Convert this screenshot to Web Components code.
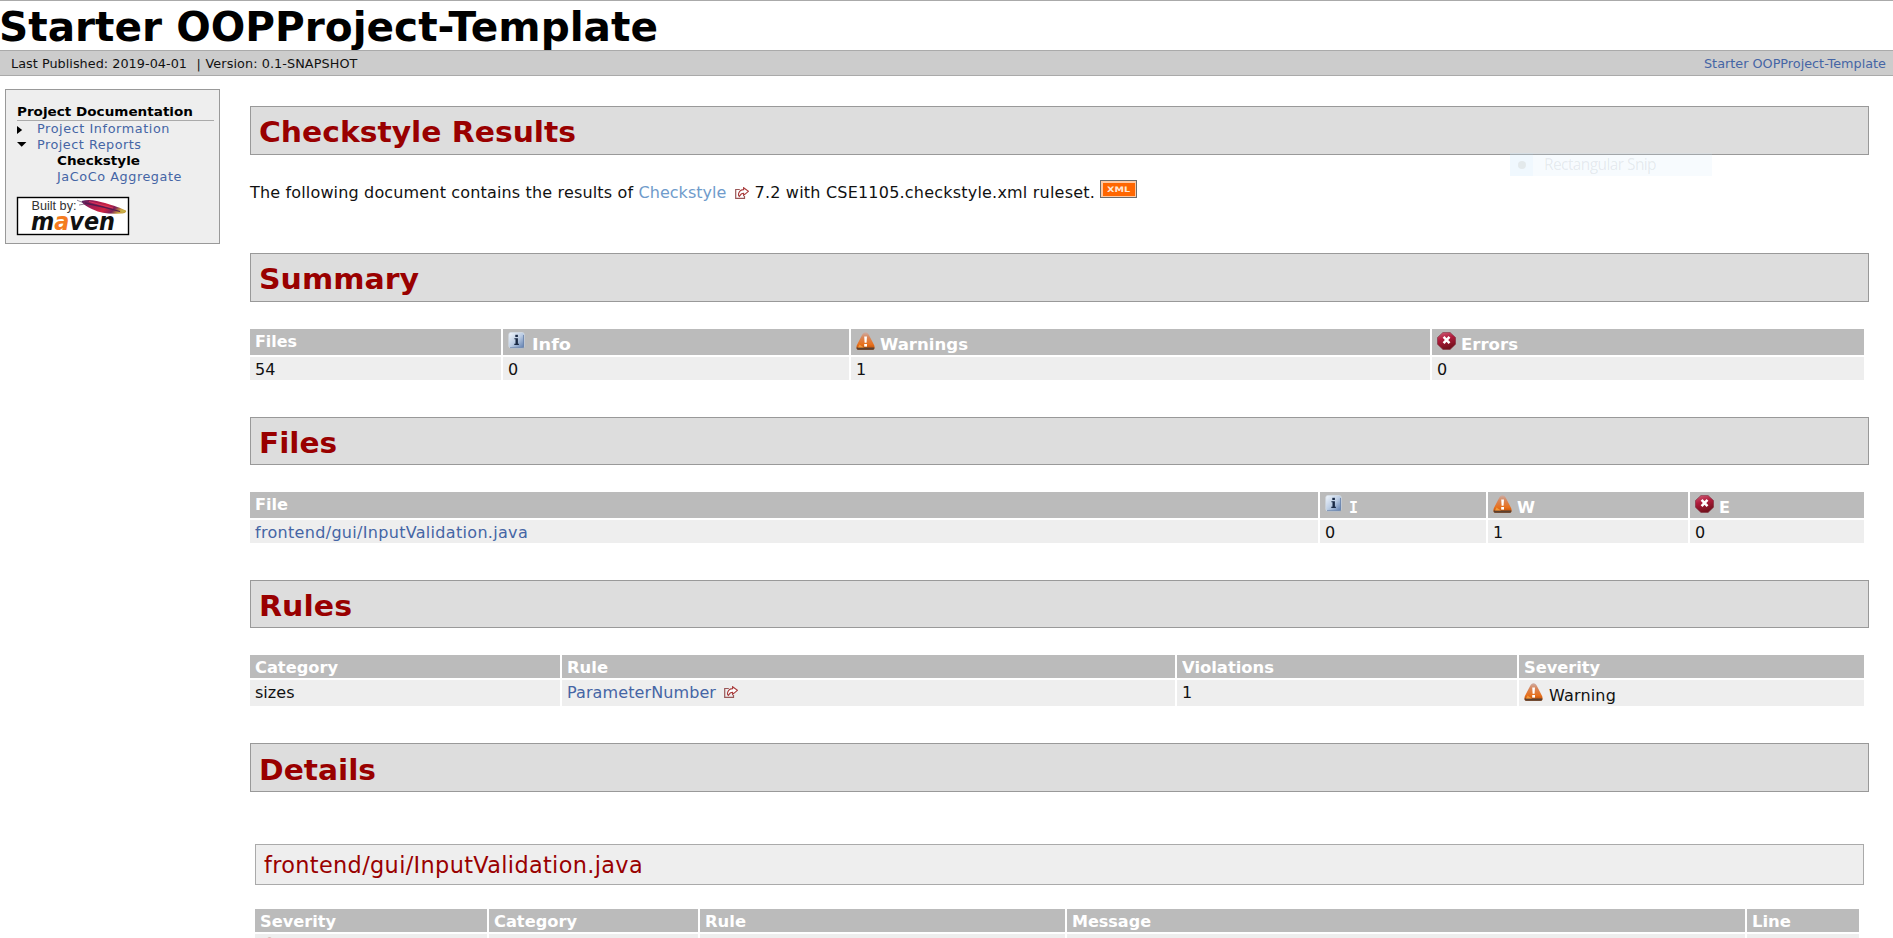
<!DOCTYPE html>
<html lang="en">
<head>
<meta charset="utf-8">
<title>Starter OOPProject-Template - Checkstyle Results</title>
<style>
html,body{margin:0;padding:0;background:#fff}
body{font-family:"DejaVu Sans",Verdana,sans-serif;font-size:16px;color:#000;height:938px;overflow:hidden}
</style>
</head>
<body>
<checkstyle-page></checkstyle-page>
<script>
function define(name, html, setup) {
  const tpl = document.createElement('template');
  tpl.innerHTML = html;
  customElements.define(name, class extends HTMLElement {
    constructor() {
      super();
      this.attachShadow({ mode: 'open' }).appendChild(tpl.content.cloneNode(true));
    }
    connectedCallback() { if (setup) setup(this, this.shadowRoot); }
  });
}

/* Text set to a given measure: bold text is widened, regular text is letter-spaced. */
define('fit-text', `<style>:host{display:inline-block;white-space:pre;flex:none}span{display:inline-block;transform-origin:0 50%}</style><span><slot></slot></span>`, (el, root) => {
  const span = root.querySelector('span');
  const target = parseFloat(el.getAttribute('w'));
  el.style.width = target + 'px';
  const natural = span.getBoundingClientRect().width;
  if (parseInt(getComputedStyle(el).fontWeight) >= 600) {
    span.style.transform = 'scaleX(' + (target / natural).toFixed(4) + ')';
  } else {
    span.style.letterSpacing = ((target - natural) / el.textContent.length).toFixed(4) + 'px';
  }
});

const ICONS = {
  info: `<svg width="17" height="17" viewBox="0 0 17 17"><defs><linearGradient id="g" x1="0" y1="0" x2="1" y2="1"><stop offset="0" stop-color="#f2f7fc"/><stop offset=".5" stop-color="#bccde4"/><stop offset="1" stop-color="#5878ab"/></linearGradient></defs><rect x=".8" y=".5" width="15.4" height="15.5" rx="2" fill="url(#g)" stroke="#d6dfea" stroke-width=".7"/><path d="M2 15.7H15.5V3" fill="none" stroke="#6680aa" stroke-width=".8"/><rect x="7.3" y="2.8" width="2.6" height="2.2" fill="#1a2a45"/><path d="M6.4 6.2h3.500v5.600h1v1.200H6.300v-1.200h1.200V7.300H6.400z" fill="#1a2a45"/></svg>`,
  warning: `<svg width="19" height="18" viewBox="0 0 19 18"><defs><linearGradient id="g" x1="0" y1="0" x2="0" y2="1"><stop offset="0" stop-color="#cdaea6"/><stop offset=".3" stop-color="#d8865a"/><stop offset=".7" stop-color="#e8701c"/><stop offset="1" stop-color="#b44a08"/></linearGradient></defs><path d="M9.500.2C11 .2 12 1.200 12.800 2.800L18.200 13.200C18.900 15.500 18.700 17.700 17 17.700H2C.3 17.700.1 15.500.8 13.200L6.200 2.800C7 1.200 8 .2 9.500.2z" fill="url(#g)"/><path d="M.6 15.500H18.400Q18.500 17.700 17 17.700H2Q.5 17.700.6 15.500z" fill="#5a4030"/><path d="M2 15.500L3.500 12.500 8 15.500z" fill="#f39a3a"/><path d="M8.200 4.600h2.800l-.4 6.200H8.600z" fill="#fff"/><rect x="8.200" y="12" width="2.800" height="2.600" fill="#fff"/></svg>`,
  error: `<svg width="19" height="18" viewBox="0 0 19 18"><defs><linearGradient id="g" x1="0" y1="0" x2=".3" y2="1"><stop offset="0" stop-color="#d0607a"/><stop offset=".45" stop-color="#b01c3c"/><stop offset="1" stop-color="#74101c"/></linearGradient></defs><path d="M6 .4H13L18.500 5.500V12.300L13 17.600H6L.5 12.300V5.500z" fill="url(#g)" stroke="#7c2a3a" stroke-width=".6"/><path d="M6.600 4.800L12.500 11.200M12.500 4.800L6.600 11.200" stroke="#fff" stroke-width="2.500"/></svg>`
};
define('status-icon', `<style>:host{display:block;flex:none}svg{display:block}</style><div></div>`, (el, root) => {
  root.querySelector('div').innerHTML = ICONS[el.getAttribute('kind')];
});

define('external-mark', `<style>:host{display:block;flex:none;width:14px;height:12px}svg{display:block}</style>
<svg width="14" height="12" viewBox="0 0 14 12"><path d="M4.800 2.500H.7V11.300H9.500V9" fill="none" stroke="#9a5858" stroke-width="1.200"/><path d="M8.600.7L13.400 4.300 8.600 8.300V6.200Q6 6.200 4.300 9.400 3 8.400 3.800 6 5 2.700 8.600 2.600z" fill="#fff" stroke="#a83a3a" stroke-width="1.100"/></svg>`);

define('xml-badge', `<style>:host{display:block;box-sizing:border-box;width:37px;height:18px;border:1px solid #6a6a6a;background:#ffc8a0;padding:1.500px;flex:none}
div{background:#f60;height:13px;color:#ffe6d4;font:bold 7.500px/13px "DejaVu Sans",sans-serif;padding-left:4.500px}</style><div><fit-text w="23">XML</fit-text></div>`);

define('maven-badge', `<style>:host{display:block}svg{display:block;overflow:visible}</style>
<svg width="112" height="38" viewBox="0 0 112 38"><defs><linearGradient id="f" x1="0" y1="0" x2="1" y2=".3"><stop offset="0" stop-color="#4a2560"/><stop offset=".3" stop-color="#a31a55"/><stop offset=".65" stop-color="#cf2340"/><stop offset=".85" stop-color="#7c2058"/><stop offset="1" stop-color="#c9a040"/></linearGradient></defs>
<rect x=".5" y=".5" width="111" height="37" fill="#fff" stroke="#000" stroke-width="1.400"/>
<text x="14.500" y="13" font-family="Liberation Sans,Arial,sans-serif" font-size="12" fill="#333" textLength="45" lengthAdjust="spacingAndGlyphs">Built by:</text>
<path d="M60 3.200L67 6M62 8L68 7" stroke="#776a80" stroke-width=".8"/>
<path d="M64.500 4C72 1.500 80 3.700 88 6 97 8.800 103 10.500 108.800 13.500 110 15 108 16.500 104 16.500 94 17.500 84 16.500 76 12.500 70 9.500 66 7.500 64.500 4z" fill="url(#f)"/>
<path d="M68 6Q86 9.500 103 14.500" stroke="#521c50" stroke-width="1.300" fill="none"/><path d="M72 4.500L96 11" stroke="#d8375c" stroke-width="1" fill="none"/>
<path d="M103 12.500L109 14 105 16z" fill="#c8b24a"/>
<text x="14" y="33.300" font-family="DejaVu Sans,sans-serif" font-size="24" font-weight="bold" font-style="italic" fill="#111" textLength="84" lengthAdjust="spacingAndGlyphs">m<tspan fill="#f47b20">a</tspan>ven</text></svg>`);

define('site-banner', `<style>:host{display:block;box-sizing:border-box;height:50px;border-top:1px solid #aaa;padding-top:3px;font-size:40px;line-height:46px;font-weight:bold;text-indent:0}::slotted(*){margin-left:-1px}</style><slot></slot>`);

define('crumb-bar', `<style>:host{display:flex;box-sizing:border-box;height:26px;border:solid #aaa;border-width:1px 0;background:#ccc;padding:5px 7px 0 11px;font-size:12.800px;line-height:15px;color:#111}
.sep{margin-left:9.500px;width:9px}.r{margin-left:auto;color:#4565a5}</style>
<fit-text w="176">Last Published: 2019-04-01</fit-text><span class="sep">|</span><fit-text w="152">Version: 0.1-SNAPSHOT</fit-text><fit-text class="r" w="182">Starter OOPProject-Template</fit-text>`);

define('nav-item', `<style>:host{display:flex;height:16px;line-height:15px;color:#4565a5}
:host([current]){color:#000;font-weight:bold}
i{width:20px;display:block;flex:none}:host([level="2"]) i{width:40px}svg{display:none}
:host([state="closed"]) .c,:host([state="open"]) .o{display:block}</style>
<i><svg class="c" width="10" height="15"><path d="M0 5L5.200 9 0 13z"/></svg><svg class="o" width="10" height="15"><path d="M0 5H9.400L4.700 9.700z"/></svg></i><slot></slot>`);

define('side-nav', `<style>:host{display:block;box-sizing:border-box;width:215px;height:155px;border:1px solid #999;background:#eee;padding:14px 5px 0 11px;font-size:12.800px;line-height:15px}
.h{font-weight:bold;height:16px;border-bottom:1px solid #aaa}maven-badge{margin-top:12px}</style>
<div class="h"><fit-text w="176">Project Documentation</fit-text></div>
<nav-item state="closed"><fit-text w="133">Project Information</fit-text></nav-item>
<nav-item state="open"><fit-text w="104.500">Project Reports</fit-text></nav-item>
<nav-item level="2" current><fit-text w="83">Checkstyle</fit-text></nav-item>
<nav-item level="2"><fit-text w="125">JaCoCo Aggregate</fit-text></nav-item>
<maven-badge></maven-badge>`);

define('section-title', `<style>:host{display:block;box-sizing:border-box;height:49px;border:1px solid #999;background:#ddd;color:#900;padding:8px 0 0 8px;font-size:28.800px;line-height:34px;font-weight:bold}
:host([short]){height:48px}:host([low]){padding-top:9px}
:host([sub]){height:41px;margin:0 5px;background:#eee;border-color:#aaa;font-weight:normal;font-size:22.400px;line-height:26px;padding:7px 0 0 8px}</style><slot></slot>`);

define('data-cell', `<style>:host{display:flex;align-items:flex-start;background:#eee;padding-left:5px;line-height:21px;padding-top:2px;overflow:hidden;box-sizing:border-box;color:#111}
:host([head]){background:#bbb;color:#fff;font-weight:bold}
:host([icon]){padding-top:5px}
:host([icon]) status-icon{display:block;margin:-2px 5px 0 0}
:host([icon="info"]) status-icon{margin-right:7px}
:host([icon]:not([head])) status-icon{margin-right:6px}
:host([link]){color:#4565a5}::slotted(external-mark){margin:4px 0 0 8px}</style><slot></slot>`, (el, root) => {
  if (!el.hasAttribute('icon')) return;
  const icon = document.createElement('status-icon');
  icon.setAttribute('kind', el.getAttribute('icon'));
  root.insertBefore(icon, root.querySelector('slot'));
});

define('report-table', `<style>:host{display:grid;gap:2px}</style><slot></slot>`, el => {
  el.style.gridTemplateColumns = el.getAttribute('cols');
  el.style.gridTemplateRows = el.getAttribute('rows');
});

/* Translucent menu entry caught mid-fade over the page. */
define('fading-menu', `<style>:host{position:absolute;left:1510px;top:153px;width:202px;height:23px;display:flex;background:rgba(205,230,252,.17);color:rgba(70,85,95,.11);font:15.500px/23px "Open Sans",sans-serif}
i{width:23px;height:23px;background:rgba(190,225,252,.1);display:flex;align-items:center;justify-content:center;margin-right:11px}b{width:8px;height:8px;border-radius:4px;background:rgba(150,140,120,.14)}</style><i><b></b></i><fit-text w="112">Rectangular Snip</fit-text>`);

define('checkstyle-page', `<style>:host{display:block;height:938px;overflow:hidden;position:relative}
.body{display:flex;padding:13px 24px 0 5px;align-items:flex-start}
main{flex:1;margin:17px 0 0 30px;min-width:0}
.intro{display:flex;height:27px;margin-top:25px;line-height:21px;color:#111}
.intro>fit-text,.intro>external-mark{margin-top:2px}
.intro .l{color:#6f9bcb;margin-left:0}.intro external-mark{margin:7px 6px 0 8px}
report-table{margin-right:5px}</style>
<site-banner><fit-text w="659">Starter OOPProject-Template</fit-text></site-banner>
<crumb-bar></crumb-bar>
<div class="body"><side-nav></side-nav>
<main>
<section-title><fit-text w="317">Checkstyle Results</fit-text></section-title>
<div class="intro"><fit-text w="388.500">The following document contains the results of </fit-text><fit-text class="l" w="88">Checkstyle</fit-text><external-mark></external-mark><fit-text w="340.500" style="margin-right:5px">7.2 with CSE1105.checkstyle.xml ruleset.</fit-text><xml-badge></xml-badge></div>
<section-title style="margin-top:46px"><fit-text w="160">Summary</fit-text></section-title>
<report-table style="margin-top:27px" cols="251px 346px 579px 1fr" rows="26px 23px">
<data-cell head><fit-text w="42">Files</fit-text></data-cell>
<data-cell head icon="info"><fit-text w="39">Info</fit-text></data-cell>
<data-cell head icon="warning"><fit-text w="88">Warnings</fit-text></data-cell>
<data-cell head icon="error"><fit-text w="57">Errors</fit-text></data-cell>
<data-cell>54</data-cell><data-cell>0</data-cell><data-cell>1</data-cell><data-cell>0</data-cell>
</report-table>
<section-title short style="margin-top:37px"><fit-text w="78">Files</fit-text></section-title>
<report-table style="margin-top:27px" cols="1068px 166px 200px 1fr" rows="26px 23px">
<data-cell head><fit-text w="33">File</fit-text></data-cell>
<data-cell head icon="info"><fit-text w="9" style="font-family:'DejaVu Sans Mono',monospace">I</fit-text></data-cell>
<data-cell head icon="warning"><fit-text w="18">W</fit-text></data-cell>
<data-cell head icon="error"><fit-text w="11">E</fit-text></data-cell>
<data-cell link><fit-text w="273">frontend/gui/InputValidation.java</fit-text></data-cell><data-cell>0</data-cell><data-cell>1</data-cell><data-cell>0</data-cell>
</report-table>
<section-title short style="margin-top:37px"><fit-text w="93">Rules</fit-text></section-title>
<report-table style="margin-top:27px" cols="310px 613px 340px 1fr" rows="23px 26px">
<data-cell head><fit-text w="83">Category</fit-text></data-cell>
<data-cell head><fit-text w="41">Rule</fit-text></data-cell>
<data-cell head><fit-text w="92">Violations</fit-text></data-cell>
<data-cell head><fit-text w="76">Severity</fit-text></data-cell>
<data-cell><fit-text w="39.500">sizes</fit-text></data-cell>
<data-cell link><fit-text w="149">ParameterNumber</fit-text><external-mark></external-mark></data-cell>
<data-cell>1</data-cell>
<data-cell icon="warning"><fit-text w="67">Warning</fit-text></data-cell>
</report-table>
<section-title low style="margin-top:37px"><fit-text w="117">Details</fit-text></section-title>
<section-title sub style="margin-top:52px"><fit-text w="379">frontend/gui/InputValidation.java</fit-text></section-title>
<report-table style="margin:24px 10px 0 5px" cols="232px 209px 365px 678px 1fr" rows="23px 26px">
<data-cell head><fit-text w="76">Severity</fit-text></data-cell>
<data-cell head><fit-text w="83">Category</fit-text></data-cell>
<data-cell head><fit-text w="41">Rule</fit-text></data-cell>
<data-cell head><fit-text w="79">Message</fit-text></data-cell>
<data-cell head><fit-text w="39">Line</fit-text></data-cell>
<data-cell icon="warning"></data-cell><data-cell></data-cell><data-cell></data-cell><data-cell></data-cell><data-cell></data-cell>
</report-table>
</main></div>
<fading-menu></fading-menu>`);
</script>
</body>
</html>
